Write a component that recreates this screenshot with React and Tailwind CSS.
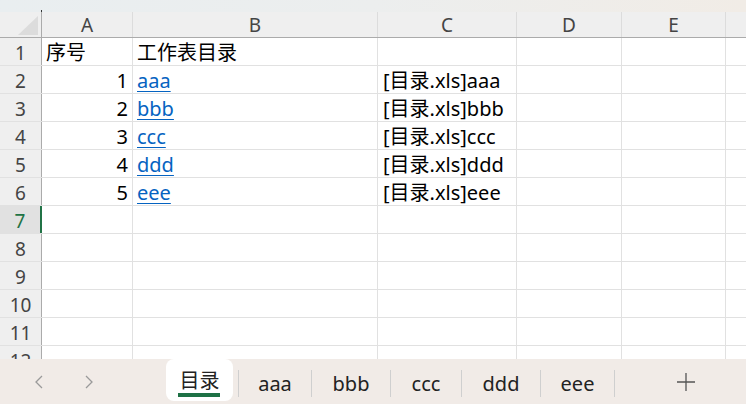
import React from 'react';

const FONT = { fontFamily: '"Noto Sans", "Noto Sans CJK SC", sans-serif' };

// 列宽（像素）
const COLS = [
  { key: 'A', w: 'w-[91px]' },
  { key: 'B', w: 'w-[245px]' },
  { key: 'C', w: 'w-[139px]' },
  { key: 'D', w: 'w-[105px]' },
  { key: 'E', w: 'w-[104px]' },
];

const ROWS = [
  { n: 1, a: '序号', b: '工作表目录', c: '', head: true },
  { n: 2, a: '1', b: 'aaa', c: '[目录.xls]aaa' },
  { n: 3, a: '2', b: 'bbb', c: '[目录.xls]bbb' },
  { n: 4, a: '3', b: 'ccc', c: '[目录.xls]ccc' },
  { n: 5, a: '4', b: 'ddd', c: '[目录.xls]ddd' },
  { n: 6, a: '5', b: 'eee', c: '[目录.xls]eee' },
  { n: 7 },
  { n: 8 },
  { n: 9 },
  { n: 10 },
  { n: 11 },
  { n: 12 },
];

const TABS = [
  { label: 'aaa', w: 'w-[72px]' },
  { label: 'bbb', w: 'w-[78px]' },
  { label: 'ccc', w: 'w-[70px]' },
  { label: 'ddd', w: 'w-[78px]' },
  { label: 'eee', w: 'w-[73px]' },
];

// 行号单元格
const RowHeader = ({ n, selected }) => (
  <div
    className={`w-[42px] shrink-0 flex items-end justify-center pb-[1px] text-[19px] leading-[22px] border-r ${
      selected
        ? 'bg-[#e1e1e1] text-[#217346] border-r-2 border-[#217346]'
        : 'bg-[#efefef] text-[#444] border-[#ababab]'
    }`}
  >
    {n}
  </div>
);

const Cell = ({ w, children, align = 'left', className = '' }) => (
  <div
    className={`${w} shrink-0 h-full border-r border-[#e1e1e1] flex items-end pb-[1px] text-[20px] leading-[22px] text-black whitespace-nowrap overflow-visible ${
      align === 'right' ? 'justify-end pr-[4px]' : 'pl-[4px]'
    } ${className}`}
  >
    {children}
  </div>
);

const Row = ({ row }) => (
  <div className="flex h-[28px] shrink-0 border-b border-[#e1e1e1]">
    <RowHeader n={row.n} selected={row.n === 7} />
    <Cell w="w-[91px]" align={row.head ? 'left' : 'right'}>
      {row.a}
    </Cell>
    <Cell w="w-[245px]">
      {row.b &&
        (row.head ? (
          row.b
        ) : (
          <span className="text-[#0563c1] underline underline-offset-[3px] decoration-1">
            {row.b}
          </span>
        ))}
    </Cell>
    <Cell w="w-[139px]" className="pl-[5px]">
      {row.c}
    </Cell>
    <Cell w="w-[105px]" />
    <Cell w="w-[104px]" />
    <div className="flex-1" />
  </div>
);

const Chevron = ({ dir }) => (
  <svg width="10" height="16" viewBox="0 0 10 16" fill="none">
    <path
      d={dir === 'left' ? 'M8 2 L2 8 L8 14' : 'M2 2 L8 8 L2 14'}
      stroke="#9a9a9a"
      strokeWidth="1.3"
    />
  </svg>
);

const Sep = () => <div className="w-px h-[27px] bg-[#cfcfcf] self-center mt-[4px]" />;

export default function App() {
  return (
    <div
      className="w-[746px] h-[404px] overflow-hidden flex flex-col bg-white select-none"
      style={FONT}
    >
      {/* 顶部条 */}
      <div className="h-[12px] shrink-0 bg-gradient-to-r from-[#e9eef0] via-[#eceeee] to-[#f1ece6] relative">
        <div className="absolute left-[41px] bottom-0 w-px h-[2px] bg-[#333]" />
      </div>

      {/* 列标题 */}
      <div className="flex h-[26px] shrink-0 bg-[#efefef] border-b border-[#ababab]">
        <div className="w-[42px] shrink-0 border-r border-[#ababab] flex items-end justify-end pr-[3px] pb-[2px]">
          <svg width="20" height="19" viewBox="0 0 20 19">
            <polygon points="20,0 20,19 0,19" fill="#dcdcdc" />
          </svg>
        </div>
        {COLS.map((c) => (
          <div
            key={c.key}
            className={`${c.w} shrink-0 border-r border-[#dcdcdc] flex items-end justify-center pb-[1px] text-[19px] leading-[22px] text-[#444]`}
          >
            {c.key}
          </div>
        ))}
        <div className="flex-1" />
      </div>

      {/* 表格主体 */}
      <div className="flex-1 overflow-hidden flex flex-col">
        {ROWS.map((r) => (
          <Row key={r.n} row={r} />
        ))}
      </div>

      {/* 工作表标签栏 */}
      <div className="h-[45px] shrink-0 bg-[#f1ebe7] flex items-start">
        <div className="w-[166px] shrink-0 h-full flex items-center pl-[34px] gap-[40px] pt-[1px]">
          <Chevron dir="left" />
          <Chevron dir="right" />
        </div>
        <div className="w-[67px] h-[42px] shrink-0 bg-white rounded-[8px] flex flex-col items-center relative">
          <span className="text-[20px] leading-[24px] text-[#222] mt-[10px]">目录</span>
          <div className="absolute left-[12px] top-[34px] w-[42px] h-[4px] bg-[#1e7145]" />
        </div>
        <div className="w-[5px] shrink-0" />
        {TABS.map((t) => (
          <React.Fragment key={t.label}>
            <Sep />
            <div
              className={`${t.w} shrink-0 h-full flex items-center justify-center text-[20px] leading-[24px] text-[#222] pt-[4px]`}
            >
              {t.label}
            </div>
          </React.Fragment>
        ))}
        <Sep />
        <div className="flex-1 h-full flex items-center justify-center pt-[1px] pl-[10px]">
          <svg width="18" height="18" viewBox="0 0 18 18">
            <path d="M9 0 V18 M0 9 H18" stroke="#555" strokeWidth="1.3" />
          </svg>
        </div>
      </div>
    </div>
  );
}
